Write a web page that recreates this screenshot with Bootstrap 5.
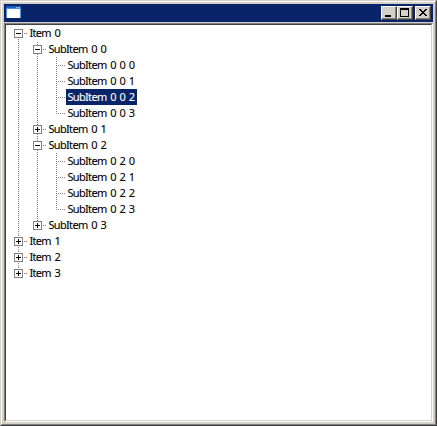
<!DOCTYPE html>
<html lang="en">
<head>
<meta charset="utf-8">
<title>Tree view</title>
<link rel="stylesheet" href="https://cdn.jsdelivr.net/npm/bootstrap@5.3.0/dist/css/bootstrap.min.css">
<style>
body{width:437px;height:426px;overflow:hidden;background:#d4d0c8;font:11px/16px "Noto Sans",Tahoma,sans-serif;color:#000}
.win{height:426px;border:1px solid;border-color:#d4d0c8 #404040 #404040 #d4d0c8}
.win-in{border:1px solid;border-color:#fff #808080 #808080 #fff;padding:2px}
.title-bar{height:18px;background:#0a246a;padding:0 2px;margin-bottom:1px}
.cap{width:16px;height:14px;padding:0;border:1px solid;border-color:#fff #404040 #404040 #fff;border-radius:0;background:#d4d0c8;box-shadow:inset -1px -1px #808080;line-height:0}
.cap-close{margin-left:2px}
.cap svg,.app-icon,.cell svg{display:block}
.well{border:1px solid;border-color:#808080 #fff #fff #808080}
.tree{border:1px solid;border-color:#404040 #d4d0c8 #d4d0c8 #404040;background:#fff;padding-left:3px}
.tree-row{height:16px}
.cell{width:19px;height:16px;flex:none}
.label{height:16px;padding:0 2px 0 1.4px;white-space:nowrap;letter-spacing:-.65px;word-spacing:1.4px;-webkit-text-stroke:.1px}
.label.sel{width:71px;background:#0a246a;color:#fff}
</style>
<script src="https://cdn.jsdelivr.net/npm/bootstrap@5.3.0/dist/js/bootstrap.bundle.min.js"></script>
</head>
<body>
<div class="win d-flex">
<div class="win-in d-flex flex-column flex-grow-1">
  <header class="title-bar d-flex align-items-center">
    <svg class="app-icon me-auto" width="16" height="14" shape-rendering="crispEdges"><path fill="#4d91dc" d="M0 0h15v12H0z"/><path fill="#1663c7" d="M0 0h15v2H0z"/><path fill="#fff" d="M1 3h13v9H1z"/><path fill="#b9d6f5" d="M10 1h1v1h-1zM12 1h1v1h-1z"/><path fill="#e8774c" d="M13 1h1v1h-1z"/></svg>
    <button class="btn cap" aria-label="Minimize"><svg width="14" height="12" shape-rendering="crispEdges"><path d="M3 8h6v2H3z"/></svg></button>
    <button class="btn cap" aria-label="Maximize"><svg width="14" height="12" shape-rendering="crispEdges"><path fill-rule="evenodd" d="M2 1h9v9H2zM3 3v6h7V3z"/></svg></button>
    <button class="btn cap cap-close" aria-label="Close"><svg width="14" height="12" shape-rendering="crispEdges"><path d="M3 2h2v1H3zM9 2h2v1H9zM4 3h2v1H4zM8 3h2v1H8zM5 4h4v1H5zM6 5h2v1H6zM5 6h4v1H5zM4 7h2v1H4zM8 7h2v1H8zM3 8h2v1H3zM9 8h2v1H9z"/></svg></button>
  </header>
  <main class="well d-flex flex-grow-1"><div class="tree flex-grow-1" id="tree"></div></main>
</div>
</div>
<script>
// Guide cells per row: | passes through, f first, m/t middle, e/l last; + or - adds an expander box.
const data=[
 ["Item 0","f-"],["SubItem 0 0","|","m-"],["SubItem 0 0 0","|","|","t"],["SubItem 0 0 1","|","|","t"],
 ["SubItem 0 0 2","|","|","t"],["SubItem 0 0 3","|","|","l"],["SubItem 0 1","|","m+"],["SubItem 0 2","|","m-"],
 ["SubItem 0 2 0","|","|","t"],["SubItem 0 2 1","|","|","t"],["SubItem 0 2 2","|","|","t"],["SubItem 0 2 3","|","|","l"],
 ["SubItem 0 3","|","e+"],["Item 1","m+"],["Item 2","m+"],["Item 3","e+"]];
function cell(kind,level){
  let d="",box="";
  const off=level%2;
  const top=kind[0]!=="f", bottom=!"el".includes(kind[0]);
  for(let y=off;y<16;y+=2) if((y<=8&&top)||(y>=8&&bottom)) d+=`M9 ${y}h1v1h-1z`;
  if(kind!=="|") for(let x=9;x<19;x+=2) d+=`M${x} 8h1v1h-1z`;
  if(kind[1]) box=`<path fill="#808080" d="M5 4h9v9H5z"/><path fill="#fff" d="M6 5h7v7H6z"/><path d="M7 8h5v1H7z${kind[1]==="+"?"M9 6h1v5H9z":""}"/>`;
  return `<div class="cell"><svg width="19" height="16" shape-rendering="crispEdges"><path fill="#808080" d="${d}"/>${box}</svg></div>`;
}
document.getElementById("tree").innerHTML=data.map(([t,...g])=>`<div class="tree-row d-flex">${g.map(cell).join("")}<div class="label${t==="SubItem 0 0 2"?" sel":""}">${t}</div></div>`).join("");
</script>
</body>
</html>
